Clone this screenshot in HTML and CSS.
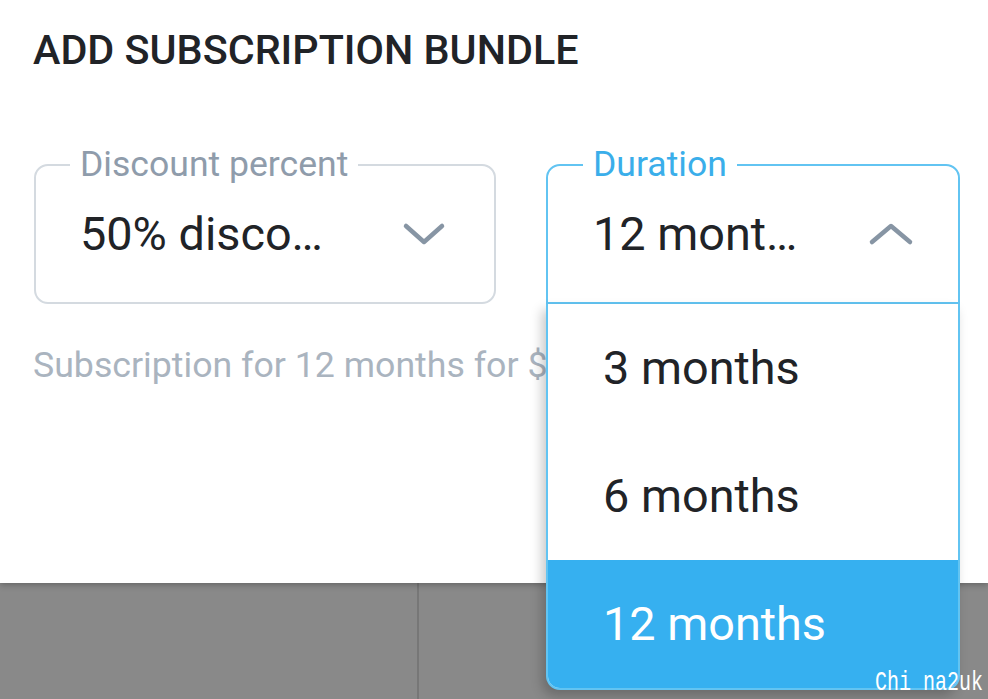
FILE: index.html
```html
<!DOCTYPE html>
<html lang="en">
<head>
  <meta charset="UTF-8">
  <title>Add subscription bundle</title>
  <link rel="stylesheet" href="styles.css">
</head>
<body>
  <div class="sheet">
    <h1>ADD SUBSCRIPTION BUNDLE</h1>

    <div class="fields">
      <div class="field field-discount">
        <span class="field-label">Discount percent</span>
        <span class="field-value">50% disco…</span>
        <svg class="chevron" width="44" height="24" viewBox="0 0 44 24">
          <polyline points="4,4 22,20 40,4" fill="none" stroke="#8795a4" stroke-width="4.5" stroke-linecap="round" stroke-linejoin="round"/>
        </svg>
      </div>

      <div class="field field-duration">
        <span class="field-label">Duration</span>
        <span class="field-value">12 mont…</span>
        <svg class="chevron" width="46" height="24" viewBox="0 0 46 24">
          <polyline points="4,20 23,4 42,20" fill="none" stroke="#8795a4" stroke-width="4.5" stroke-linecap="round" stroke-linejoin="round"/>
        </svg>

        <ul class="menu">
          <li>3 months</li>
          <li>6 months</li>
          <li class="selected">12 months</li>
        </ul>
      </div>
    </div>

    <p class="helper">Subscription for 12 months for $</p>
  </div>

  <div class="footer">
    <div class="footer-btn left"></div>
    <div class="footer-btn"></div>
  </div>

  <div class="watermark">Chi na2uk</div>
</body>
</html>
```

FILE: styles.css
```css
body {
  margin: 0;
  font-family: Roboto, 'Noto Sans', sans-serif;
  background: #898989;
  width: 988px;
  height: 699px;
  overflow: hidden;
  position: relative;
}

.sheet {
  position: relative;
  z-index: 1;
  height: 583px;
  box-sizing: border-box;
  padding: 30px 0 0 33px;
  background: #fff;
  box-shadow: 0 2px 6px rgba(0,0,0,0.25);
}

h1 {
  margin: 0;
  font-size: 41.3px;
  line-height: 40px;
  font-weight: 500;
  color: #212327;
}

.fields {
  display: flex;
  gap: 50px;
  margin-top: 94px;
  margin-left: 1px;
}

.field {
  position: relative;
  box-sizing: border-box;
  height: 140px;
  display: flex;
  align-items: center;
  justify-content: space-between;
  border: 2px solid #d4dae0;
  border-radius: 14px;
}

.field-discount {
  width: 462px;
  padding: 0 48px 0 44px;
}

.field-duration {
  width: 414px;
  padding: 0 44px 0 45px;
  border-color: #62c4f2;
  border-radius: 14px 14px 0 0;
}

/* label sits on top of the border, like a material outline */
.field-label {
  position: absolute;
  top: -17px;
  left: 34px;
  padding: 0 10px;
  background: #fff;
  font-size: 35.6px;
  line-height: 31px;
  color: #8f9cab;
}

.field-duration .field-label {
  left: 35px;
  color: #3aaeea;
}

.field-value {
  font-size: 46.8px;
  color: #212327;
  white-space: nowrap;
}

.chevron {
  display: block;
}

.menu {
  position: absolute;
  top: calc(100% + 2px);
  left: -2px;
  right: -2px;
  margin: 0;
  padding: 0;
  list-style: none;
  background: #fff;
  border: 2px solid #62c4f2;
  border-top: none;
  border-radius: 0 0 14px 14px;
  overflow: hidden;
  box-shadow: -4px 6px 12px rgba(0,0,0,0.22);
}

.menu li {
  height: 128px;
  display: flex;
  align-items: center;
  padding-left: 55px;
  font-size: 46.8px;
  color: #212327;
}

.menu li.selected {
  background: #36b0f0;
  color: #fff;
}

.helper {
  margin: 41px 0 0;
  font-size: 35.7px;
  line-height: 40px;
  color: #aab4bf;
  white-space: nowrap;
}

.footer {
  display: flex;
  height: 116px;
  background: #898989;
}

.footer-btn {
  flex: 1;
}

.footer-btn.left {
  flex: none;
  width: 417px;
  border-right: 2px solid #777;
}

.watermark {
  position: absolute;
  right: 5px;
  bottom: 1px;
  z-index: 3;
  font-family: 'Liberation Mono', monospace;
  font-size: 20px;
  color: #fff;
  transform: scaleY(1.4);
  transform-origin: bottom;
}
```
